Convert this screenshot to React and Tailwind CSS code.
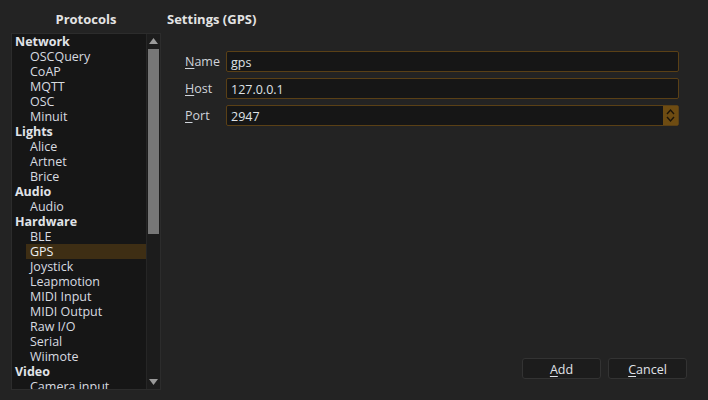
import React from "react";

const groups = [
  ["Network", ["OSCQuery", "CoAP", "MQTT", "OSC", "Minuit"]],
  ["Lights", ["Alice", "Artnet", "Brice"]],
  ["Audio", ["Audio"]],
  ["Hardware", ["BLE", "GPS", "Joystick", "Leapmotion", "MIDI Input", "MIDI Output", "Raw I/O", "Serial", "Wiimote"]],
  ["Video", ["Camera input"]],
];

function Field({ label, value, spin }) {
  return (
    <div className="flex items-center h-[21px]">
      <div className="w-[41px] text-[#d0d4da] pt-[2px]">
        <span className="underline underline-offset-2">{label[0]}</span>
        {label.slice(1)}
      </div>
      <div className="flex-1 h-[21px] flex border border-[#5a4016] rounded-[2px] bg-[#161616]">
        <div className="flex-1 px-[4px] leading-[19px] pt-[1px] text-[#dfe2e6]">{value}</div>
        {spin && (
          <div className="w-[15px] bg-[#6e4c12] flex items-center justify-center">
            <svg width="9" height="15" viewBox="0 0 9 15">
              <path d="M1 6 L4.5 2 L8 6 M1 9 L4.5 13 L8 9" stroke="#1c1408" strokeWidth="1.4" fill="none" />
            </svg>
          </div>
        )}
      </div>
    </div>
  );
}

export default function App() {
  return (
    <div
      className="w-[708px] h-[400px] bg-[#232323] text-[#d8dbe0] text-[12.5px] flex overflow-hidden"
      style={{ fontFamily: '"Open Sans", "Noto Sans", sans-serif' }}
    >
      <div className="w-[161px] pl-[11px] flex flex-col">
        <div className="h-[33px] flex items-center justify-center font-bold text-[13px] text-[#e4e4e4] pt-[7px]">
          Protocols
        </div>
        <div className="h-[357px] border border-[#2c2c2c] bg-[#161616] flex">
          <div className="flex-1 overflow-hidden">
            {groups.map(([g, items]) => (
              <div key={g}>
                <div className="h-[15px] leading-[15px] pl-[3px] font-bold text-[#e0e3e8]">{g}</div>
                {items.map((it) => (
                  <div
                    key={it}
                    className={
                      "h-[15px] leading-[15px] ml-[14px] pl-[4px] " +
                      (it === "GPS" ? "bg-[#3e2e14] text-[#eceff2]" : "")
                    }
                  >
                    {it}
                  </div>
                ))}
              </div>
            ))}
          </div>
          <div className="w-[14px] bg-[#1c1c1c] border-l border-[#262626] flex flex-col">
            <div className="h-[14px] flex items-center justify-center">
              <svg width="9" height="6" viewBox="0 0 9 6"><path d="M0 6 L4.5 0 L9 6 Z" fill="#9a9a9a" /></svg>
            </div>
            <div className="h-[185px] mt-[1px] mx-[1px] bg-[#777777]" />
            <div className="flex-1" />
            <div className="h-[14px] flex items-center justify-center">
              <svg width="9" height="6" viewBox="0 0 9 6"><path d="M0 0 L4.5 6 L9 0 Z" fill="#9a9a9a" /></svg>
            </div>
          </div>
        </div>
      </div>
      <div className="flex-1 flex flex-col pl-[6px]">
        <div className="h-[33px] flex items-center font-bold text-[13px] text-[#e4e4e4] pt-[7px]">Settings (GPS)</div>
        <div className="flex flex-col gap-[6px] mt-[18px] ml-[18px] mr-[29px]">
          <Field label="Name" value="gps" />
          <Field label="Host" value="127.0.0.1" />
          <Field label="Port" value="2947" spin />
        </div>
        <div className="flex-1" />
        <div className="flex justify-end gap-[7px] mr-[21px] mb-[21px]">
          <button className="w-[79px] h-[21px] pt-[2px] bg-[#1c1c1c] border border-[#333333] rounded-[3px] text-[#e0e3e8]">
            <span className="underline underline-offset-2">A</span>dd
          </button>
          <button className="w-[79px] h-[21px] pt-[2px] bg-[#1c1c1c] border border-[#333333] rounded-[3px] text-[#e0e3e8]">
            <span className="underline underline-offset-2">C</span>ancel
          </button>
        </div>
      </div>
    </div>
  );
}
